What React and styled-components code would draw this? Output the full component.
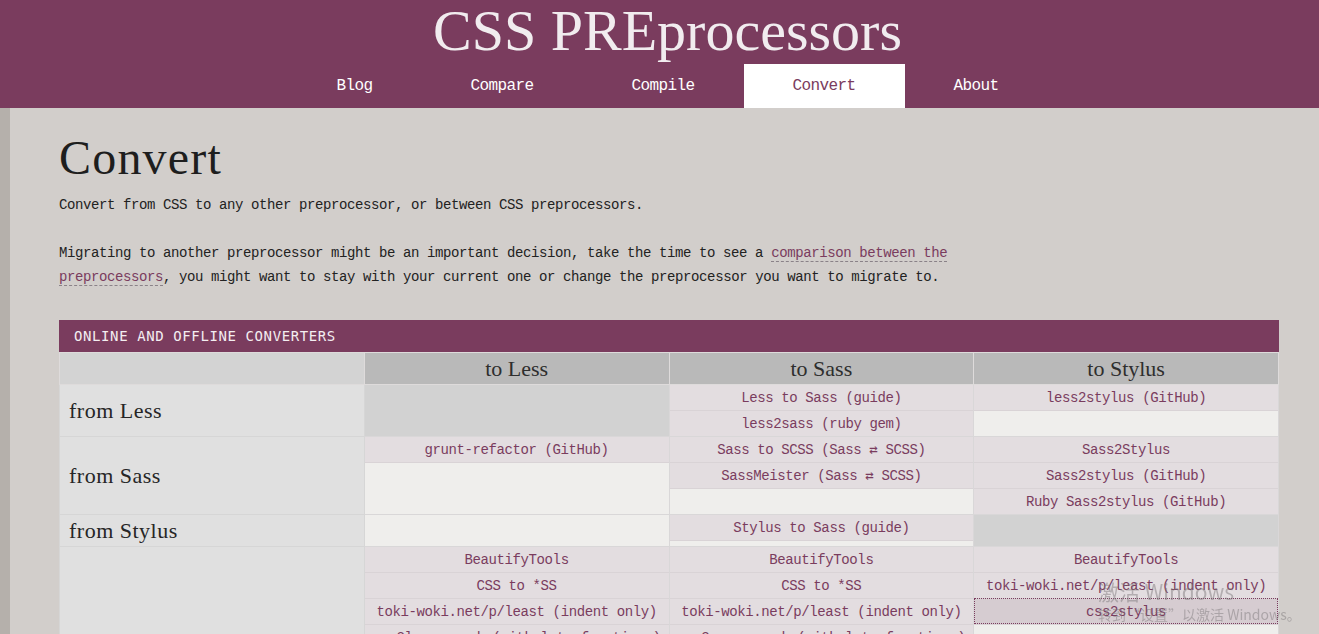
import React from 'react';
import styled, { createGlobalStyle } from 'styled-components';

const converters = [
	{
		label: 'from Less',
		cells: ['na', ['Less to Sass (guide)', 'less2sass (ruby gem)'], ['less2stylus (GitHub)']],
	},
	{
		label: 'from Sass',
		cells: [
			['grunt-refactor (GitHub)'],
			['Sass to SCSS (Sass ⇄ SCSS)', 'SassMeister (Sass ⇄ SCSS)'],
			['Sass2Stylus', 'Sass2stylus (GitHub)', 'Ruby Sass2stylus (GitHub)'],
		],
	},
	{
		label: 'from Stylus',
		cells: [[], ['Stylus to Sass (guide)'], 'na'],
	},
	{
		label: 'from CSS',
		cells: [
			[
				'BeautifyTools',
				'CSS to *SS',
				'toki-woki.net/p/least (indent only)',
				'css2less.co.uk (with lot of options)',
				'css2less (GitHub)',
				'css2less (npm)',
				'css2less (ruby gem)',
				'Less.js converter',
			],
			[
				'BeautifyTools',
				'CSS to *SS',
				'toki-woki.net/p/least (indent only)',
				'css2sass.co.uk (with lot of options)',
				'css2sass (GitHub)',
				'sass-convert (ruby gem)',
			],
			['BeautifyTools', 'toki-woki.net/p/least (indent only)', { text: 'css2stylus', focused: true }],
		],
	},
];

const tabs = ['Blog', 'Compare', 'Compile', 'Convert', 'About'];

const App = () => {
	return (
		<>
			<GlobalStyle />
			<Header>
				<SiteTitle>CSS PREprocessors</SiteTitle>
				<Nav>
					{tabs.map((tab) => (
						<NavTab key={tab} $active={tab === 'Convert'}>
							{tab}
						</NavTab>
					))}
				</Nav>
			</Header>

			<Main>
				<PageTitle>Convert</PageTitle>
				<Text>Convert from CSS to any other preprocessor, or between CSS preprocessors.</Text>
				<Text>
					Migrating to another preprocessor might be an important decision, take the time to see a{' '}
					<InlineLink>comparison between the preprocessors</InlineLink>, you might want to stay with your
					current one or change the preprocessor you want to migrate to.
				</Text>

				<Converters>
					<TableTitle>Online and offline converters</TableTitle>
					<Grid>
						<thead>
							<tr>
								<HeadCell $corner />
								<HeadCell>to Less</HeadCell>
								<HeadCell>to Sass</HeadCell>
								<HeadCell>to Stylus</HeadCell>
							</tr>
						</thead>
						<tbody>
							{converters.map((row) => (
								<tr key={row.label}>
									<RowLabel>{row.label}</RowLabel>
									{row.cells.map((cell, i) => (
										<Cell key={i} $na={cell === 'na'}>
											{cell !== 'na' &&
												cell.map((item) => {
													const text = typeof item === 'string' ? item : item.text;
													return (
														<ToolLink key={text} $focused={item.focused}>
															{text}
														</ToolLink>
													);
												})}
										</Cell>
									))}
								</tr>
							))}
						</tbody>
					</Grid>
				</Converters>
			</Main>

			<Watermark>
				<WatermarkBig>激活 Windows</WatermarkBig>
				<WatermarkSmall>转到“设置”以激活 Windows。</WatermarkSmall>
			</Watermark>
		</>
	);
};

export default App;

const purple = '#7a3c5e';

const GlobalStyle = createGlobalStyle`
	html, body {
		margin: 0;
		padding: 0;
		overflow: hidden;
		background: #d2cecb;
	}

	body {
		font-family: "Liberation Mono", monospace;
		color: #222;
	}
`;

const Header = styled.header`
	background: ${purple};
	display: flex;
	flex-direction: column;
	align-items: center;
	padding-left: 16px;
`;

const SiteTitle = styled.h1`
	margin: 0;
	font-family: "Liberation Serif", serif;
	font-weight: normal;
	font-size: 58px;
	line-height: 62px;
	color: #f1ecef;
`;

const Nav = styled.nav`
	display: flex;
	margin-top: 2px;
`;

const NavTab = styled.a`
	display: block;
	padding: 0 49px;
	height: 44px;
	line-height: 44px;
	font-family: "Liberation Mono", monospace;
	font-size: 16px;
	letter-spacing: -0.6px;
	color: ${(p) => (p.$active ? purple : '#fff')};
	background: ${(p) => (p.$active ? '#fff' : 'transparent')};
	cursor: pointer;
`;

const Main = styled.main`
	border-left: 10px solid #b5b0ab;
	padding: 24px 40px 40px 49px;
	min-height: 600px;
`;

const PageTitle = styled.h2`
	margin: 0 0 9px;
	font-family: "Liberation Serif", serif;
	font-weight: normal;
	font-size: 48px;
	line-height: 52px;
	letter-spacing: 1.2px;
	color: #1e1e1e;
`;

const Text = styled.p`
	margin: 0 0 24px;
	max-width: 915px;
	font-size: 14px;
	letter-spacing: -0.4px;
	line-height: 24px;
`;

const InlineLink = styled.a`
	color: ${purple};
	text-decoration: none;
	border-bottom: 1px dashed #8a8288;
	cursor: pointer;
`;

const Converters = styled.section`
	margin-top: 31px;
`;

const TableTitle = styled.div`
	height: 32px;
	line-height: 32px;
	padding-left: 15px;
	background: ${purple};
	color: #f4eef1;
	font-family: "DejaVu Sans Mono", monospace;
	font-size: 14px;
	letter-spacing: 0.6px;
	text-transform: uppercase;
`;

const Grid = styled.table`
	width: 100%;
	border-collapse: collapse;
	table-layout: fixed;
`;

const HeadCell = styled.th`
	height: 31px;
	padding: 0;
	border: 1px solid #dedbdb;
	background: ${(p) => (p.$corner ? '#d3d3d3' : '#b9b9b9')};
	font-family: "Liberation Serif", serif;
	font-weight: normal;
	font-size: 22px;
	line-height: 31px;
	color: #2e2e2e;
`;

const RowLabel = styled.td`
	padding: 0 9px;
	border: 1px solid #d6d6d6;
	background: #e0e0e0;
	vertical-align: middle;
	font-family: "Liberation Serif", serif;
	font-size: 22px;
	letter-spacing: 0.5px;
	line-height: 31px;
	color: #262626;
`;

const Cell = styled.td`
	padding: 0;
	border: 1px solid #d9d7d8;
	vertical-align: top;
	background: ${(p) => (p.$na ? '#d2d2d2' : '#efeeec')};
`;

const ToolLink = styled.a`
	display: block;
	height: 25px;
	line-height: 26px;
	text-align: center;
	white-space: nowrap;
	overflow: hidden;
	font-size: 14px;
	letter-spacing: -0.4px;
	color: ${purple};
	background: ${(p) => (p.$focused ? '#d6ccd1' : '#e3dde0')};
	outline: ${(p) => (p.$focused ? `1px dotted ${purple}` : 'none')};
	outline-offset: -1px;
	box-shadow: 0 1px 0 #d9d3d6;
	cursor: pointer;

	& + & {
		border-top: 1px solid #d9d3d6;
	}
`;

const Watermark = styled.div`
	position: fixed;
	left: 1098px;
	top: 578px;
	font-family: "Noto Sans CJK SC", "Noto Sans", sans-serif;
	color: rgba(120, 116, 118, 0.45);
	pointer-events: none;
`;

const WatermarkBig = styled.div`
	font-size: 21px;
	line-height: 26px;
`;

const WatermarkSmall = styled.div`
	font-size: 14px;
	line-height: 20px;
`;
